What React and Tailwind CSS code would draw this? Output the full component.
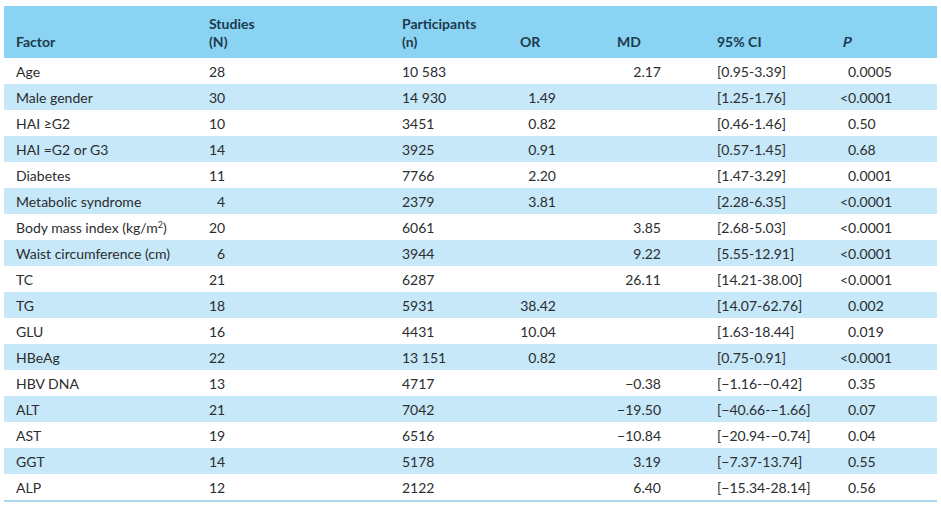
import React from "react";

const rows = [
	["Age", "28", "10 583", "", "2.17", "[0.95-3.39]", "0.0005"],
	["Male gender", "30", "14 930", "1.49", "", "[1.25-1.76]", "<0.0001"],
	["HAI \u2265G2", "10", "3451", "0.82", "", "[0.46-1.46]", "0.50"],
	["HAI =G2 or G3", "14", "3925", "0.91", "", "[0.57-1.45]", "0.68"],
	["Diabetes", "11", "7766", "2.20", "", "[1.47-3.29]", "0.0001"],
	["Metabolic syndrome", "4", "2379", "3.81", "", "[2.28-6.35]", "<0.0001"],
	["BMI", "20", "6061", "", "3.85", "[2.68-5.03]", "<0.0001"],
	["Waist circumference (cm)", "6", "3944", "", "9.22", "[5.55-12.91]", "<0.0001"],
	["TC", "21", "6287", "", "26.11", "[14.21-38.00]", "<0.0001"],
	["TG", "18", "5931", "38.42", "", "[14.07-62.76]", "0.002"],
	["GLU", "16", "4431", "10.04", "", "[1.63-18.44]", "0.019"],
	["HBeAg", "22", "13 151", "0.82", "", "[0.75-0.91]", "<0.0001"],
	["HBV DNA", "13", "4717", "", "\u22120.38", "[\u22121.16-\u22120.42]", "0.35"],
	["ALT", "21", "7042", "", "\u221219.50", "[\u221240.66-\u22121.66]", "0.07"],
	["AST", "19", "6516", "", "\u221210.84", "[\u221220.94-\u22120.74]", "0.04"],
	["GGT", "14", "5178", "", "3.19", "[\u22127.37-13.74]", "0.55"],
	["ALP", "12", "2122", "", "6.40", "[\u221215.34-28.14]", "0.56"],
];

function FactorName({ name }) {
	if (name === "BMI") {
		return <span>Body mass index (kg/m<sup className="text-[9px]">2</sup>)</span>;
	}
	return <span>{name}</span>;
}

function PValue({ value }) {
	if (value.startsWith("<")) {
		return <span className="-ml-[8px]">{value}</span>;
	}
	return <span>{value}</span>;
}

export default function App() {
	return <div className="w-[941px] h-[505px] bg-white pt-[6px] px-[4px] font-['Lato','Noto_Sans',sans-serif] text-[14px] text-[#2b2d30]">
		<div className="w-[933px] border-b-2 border-[#a9d9ef]">
			<div className="flex items-end h-[52px] bg-[#8ad3f2] text-[#1c3a4e] font-bold leading-[18px] pb-[7px]">
				<div className="w-[205px] pl-[12px]">Factor</div>
				<div className="w-[193px]">Studies<br />(N)</div>
				<div className="w-[98px]">Participants<br />(n)</div>
				<div className="w-[75px] pl-[20px]">OR</div>
				<div className="w-[125px] pl-[42px]">MD</div>
				<div className="w-[130px] pl-[17px]">95% CI</div>
				<div className="w-[107px] pl-[13px]"><span className="inline-block -skew-x-12">P</span></div>
			</div>
			{rows.map((r, i) => (
				<div key={i} className={`flex items-center h-[26px] ${i % 2 === 1 ? "bg-[#c6e8f8]" : "bg-white"}`}>
					<div className="w-[205px] pl-[12px] whitespace-nowrap"><FactorName name={r[0]} /></div>
					<div className="w-[193px]"><span className="inline-block w-[16px] text-right">{r[1]}</span></div>
					<div className="w-[98px]">{r[2]}</div>
					<div className="w-[75px] pr-[19px] text-right">{r[3]}</div>
					<div className="w-[125px] pr-[39px] text-right">{r[4]}</div>
					<div className="w-[130px] pl-[17px] whitespace-nowrap">{r[5]}</div>
					<div className="w-[107px] pl-[18px]"><PValue value={r[6]} /></div>
				</div>
			))}
		</div>
	</div>
}
